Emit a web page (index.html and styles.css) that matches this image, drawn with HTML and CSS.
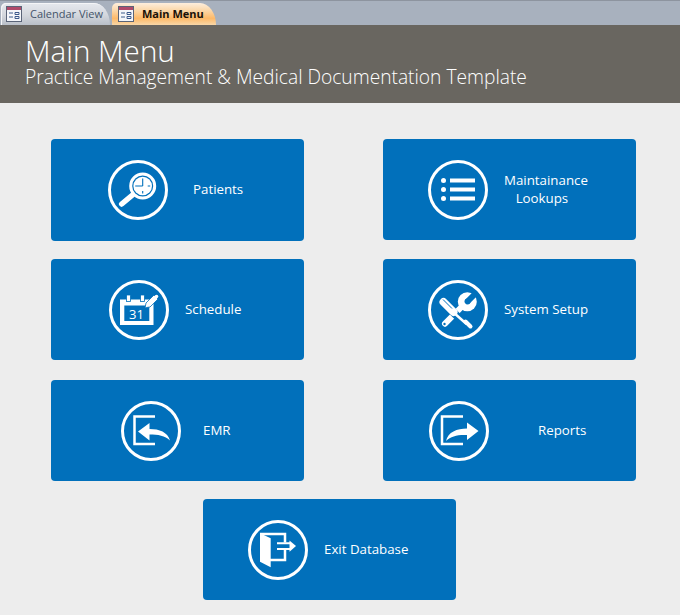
FILE: index.html
```html
<!DOCTYPE html>
<html lang="en">
  <head>
    <meta charset="UTF-8" />
    <title>Main Menu</title>
    <link rel="stylesheet" href="styles.css">
  </head>
  <body>
    <div class="tab-bar">
      <div class="tab">
        <svg class="tab-icon" viewBox="0 0 16 16"><rect x="0.5" y="0.5" width="15" height="15" fill="#f4f6fa" stroke="#5a6478"/><rect x="1" y="1" width="14" height="3" fill="#b04a6a"/><path d="M3 7h4M3 11h4M9 6.500h4v2h-4zM9 10.500h4v2h-4z" fill="none" stroke="#3c5a8c"/></svg>
        <span>Calendar View</span>
      </div>
      <div class="tab tab-active">
        <svg class="tab-icon" viewBox="0 0 16 16"><rect x="0.5" y="0.5" width="15" height="15" fill="#f4f6fa" stroke="#5a6478"/><rect x="1" y="1" width="14" height="3" fill="#b04a6a"/><path d="M3 7h4M3 11h4M9 6.500h4v2h-4zM9 10.500h4v2h-4z" fill="none" stroke="#3c5a8c"/></svg>
        <span>Main Menu</span>
      </div>
    </div>

    <header class="page-header">
      <h1>Main Menu</h1>
      <p>Practice Management &amp; Medical Documentation Template</p>
    </header>

    <main class="menu">
      <div class="menu-grid">
        <a class="menu-btn btn-patients">
          <svg class="btn-icon" viewBox="0 0 60 60">
            <circle class="ring" cx="30" cy="30" r="28.500"/>
            <path d="M24.500 35L13.700 44" fill="none" stroke="#fff" stroke-width="5.500" stroke-linecap="round"/>
            <circle cx="34.700" cy="26" r="12" fill="#0170bb" stroke="#fff" stroke-width="3"/>
            <circle cx="34.700" cy="26" r="9.300" fill="#fff"/>
            <path d="M34.700 26v-7.500M34.700 26H27.200M34.700 31v2.500M39.700 26h2.500" fill="none" stroke="#0170bb" stroke-width="1.100"/>
          </svg>
          <span class="btn-label">Patients</span>
        </a>
        <a class="menu-btn btn-lookups">
          <svg class="btn-icon" viewBox="0 0 60 60">
            <circle class="ring" cx="30" cy="30" r="28.500"/>
            <circle cx="15.500" cy="20.500" r="2.500" fill="#fff"/>
            <circle cx="15.500" cy="29.500" r="2.500" fill="#fff"/>
            <circle cx="15.500" cy="38.500" r="2.500" fill="#fff"/>
            <path d="M22 20.500h25M22 29.500h25M22 38.500h25" stroke="#fff" stroke-width="4"/>
          </svg>
          <span class="btn-label">Maintainance<span class="second-line">Lookups</span></span>
        </a>
        <a class="menu-btn btn-schedule">
          <svg class="btn-icon" viewBox="0 0 60 60">
            <circle class="ring" cx="30" cy="30" r="28.500"/>
            <path d="M11 19.500h33.500V45H11z" fill="#fff"/>
            <path d="M15.300 25.500h25V41h-25z" fill="#0170bb"/>
            <rect x="17.500" y="15" width="4" height="6.500" fill="#fff" stroke="#0170bb" stroke-width="0.800"/>
            <rect x="31.500" y="15" width="4" height="6.500" fill="#fff" stroke="#0170bb" stroke-width="0.800"/>
            <path d="M37.500 27.500l-1.500 0.500 1-5 8-8 4 4-8 8z" fill="#fff" stroke="#0170bb" stroke-width="0.800"/>
            <circle cx="47.500" cy="16.500" r="1.800" fill="#fff"/>
            <text class="cal-day" x="27.500" y="38.500">31</text>
          </svg>
          <span class="btn-label">Schedule</span>
        </a>
        <a class="menu-btn btn-setup">
          <svg class="btn-icon" viewBox="0 0 60 60">
            <circle class="ring" cx="30" cy="30" r="28.500"/>
            <circle cx="39.300" cy="21.700" r="9.500" fill="#fff"/>
            <path d="M39.500 21.500L48 13" stroke="#0170bb" stroke-width="6"/>
            <circle cx="39.500" cy="21.500" r="3" fill="#0170bb"/>
            <path d="M17 43.700L35 25.500" stroke="#fff" stroke-width="6" stroke-linecap="round"/>
            <circle cx="16.500" cy="44" r="1.200" fill="#0170bb"/>
            <path d="M22 29l18 18" stroke="#0170bb" stroke-width="8"/>
            <path d="M15.500 22l10 10" stroke="#fff" stroke-width="8" stroke-linecap="round"/>
            <path d="M15 19.500l9 9M18 17l9 9" stroke="#0170bb" stroke-width="1"/>
            <path d="M25 32l13.500 12" stroke="#fff" stroke-width="2.500"/>
            <path d="M37.500 41.500l5 5" stroke="#fff" stroke-width="4" stroke-linecap="round"/>
          </svg>
          <span class="btn-label">System Setup</span>
        </a>
        <a class="menu-btn btn-emr">
          <svg class="btn-icon" viewBox="0 0 60 60">
            <circle class="ring" cx="30" cy="30" r="28.500"/>
            <path d="M34 15.500H13.500V43H34" fill="none" stroke="#fff" stroke-width="2.500"/>
            <path d="M17 30.500L28.500 22v6c10 0 18 3 20.500 11.500c-5-5-12-6-20.500-6v6z" fill="#fff"/>
          </svg>
          <span class="btn-label">EMR</span>
        </a>
        <a class="menu-btn btn-reports">
          <svg class="btn-icon" viewBox="0 0 60 60">
            <circle class="ring" cx="30" cy="30" r="28.500"/>
            <path d="M34 15.500H13V43H34" fill="none" stroke="#fff" stroke-width="2.500"/>
            <path d="M49.500 30L38 21.500v6C28 27.500 19 31 17 40c5-5 12-6.500 21-6v5z" fill="#fff"/>
          </svg>
          <span class="btn-label">Reports</span>
        </a>
      </div>
      <a class="menu-btn btn-exit">
        <svg class="btn-icon" viewBox="0 0 60 60">
          <circle class="ring" cx="30" cy="30" r="28.500"/>
          <path d="M12 14H37V22.500M37 30v10H22" fill="none" stroke="#fff" stroke-width="2.500"/>
          <path d="M12 13.300L22.700 18.300V47.300L12 41.700z" fill="#fff"/>
          <path d="M29 23.200H42M29 29H42" stroke="#fff" stroke-width="2"/>
          <path d="M41.500 20.500L48 26l-6.500 5.700z" fill="#fff"/>
        </svg>
        <span class="btn-label">Exit Database</span>
      </a>
    </main>
  </body>
</html>
```

FILE: styles.css
```css
html,
body {
  margin: 0;
  height: 100%;
}
body {
  font-family: "Open Sans", "Noto Sans", sans-serif;
  background-color: #ededed;
  overflow: hidden;
}
.tab-bar {
  display: flex;
  gap: 2px;
  height: 25px;
  box-sizing: border-box;
  padding: 2px 0 0 1px;
  background-color: #a8b1be;
  border-top: 1px solid #8d949f;
}
.tab {
  display: flex;
  align-items: center;
  gap: 8px;
  width: 109px;
  box-sizing: border-box;
  padding: 0 0 1px 5px;
  border-radius: 5px 16px 0 0 / 5px 22px 0 0;
  background: linear-gradient(#e6e9ee, #d3d7dd 55%, #b9bfc8);
  box-shadow: inset 1px 1px 0 #f4f5f7;
  color: #44546a;
  font-size: 11px;
  white-space: nowrap;
}
.tab-active {
  width: 104px;
  padding-left: 6px;
  gap: 8px;
  background: linear-gradient(#fdeedd, #fbd6a6 35%, #fdb968 70%, #f8d7a8);
  box-shadow: none;
  color: #1a1208;
  font-weight: 700;
}
.tab-icon {
  width: 16px;
  height: 16px;
  flex: none;
}
.page-header {
  height: 78px;
  box-sizing: border-box;
  padding: 10px 25px 0;
  background-color: #696660;
  color: #fff;
}
.page-header h1 {
  margin: 0;
  font-size: 29.600px;
  font-weight: 300;
  line-height: 31px;
}
.page-header p {
  margin: 0;
  font-size: 19.200px;
  font-weight: 300;
  line-height: 22px;
}
.menu {
  padding: 36px 44px 0 51px;
  display: flex;
  flex-direction: column;
}
.menu-grid {
  display: grid;
  grid-template-columns: 253px 253px;
  grid-template-rows: 101px 102px 101px;
  column-gap: 79px;
  row-gap: 19px;
}
.menu-btn {
  display: flex;
  align-items: center;
  border-radius: 4px;
  background-color: #0170bb;
  color: #fff;
  font-size: 13.300px;
}
.btn-icon {
  width: 60px;
  height: 60px;
  flex: none;
}
.ring {
  fill: none;
  stroke: #fff;
  stroke-width: 3;
}
.cal-day {
  fill: #fff;
  font-family: "Open Sans", sans-serif;
  font-size: 13px;
  text-anchor: middle;
}
.btn-label {
  display: block;
  margin-bottom: 2px;
  text-align: center;
  white-space: nowrap;
  line-height: 18px;
}
.second-line {
  display: block;
  padding-right: 8px;
}
.btn-patients {
  margin-bottom: -1px;
  padding-left: 57px;
}
.btn-patients .btn-label {
  margin-left: 25px;
}
.btn-lookups {
  padding-left: 45px;
}
.btn-lookups .btn-label {
  margin-left: 16px;
}
.btn-schedule {
  align-self: start;
  height: 101px;
  padding-left: 58px;
}
.btn-schedule .btn-label {
  margin-left: 16px;
}
.btn-setup {
  align-self: start;
  height: 101px;
  padding-left: 45px;
}
.btn-setup .btn-label {
  margin-left: 16px;
}
.btn-emr {
  padding-left: 70px;
}
.btn-emr .btn-label {
  margin-left: 22px;
}
.btn-reports {
  padding-left: 46px;
}
.btn-reports .btn-label {
  margin-left: 49px;
}
.btn-exit {
  width: 253px;
  height: 101px;
  box-sizing: border-box;
  margin: 18px 0 0 152px;
  padding-left: 45px;
}
.btn-exit .btn-label {
  margin-left: 16px;
}
```
